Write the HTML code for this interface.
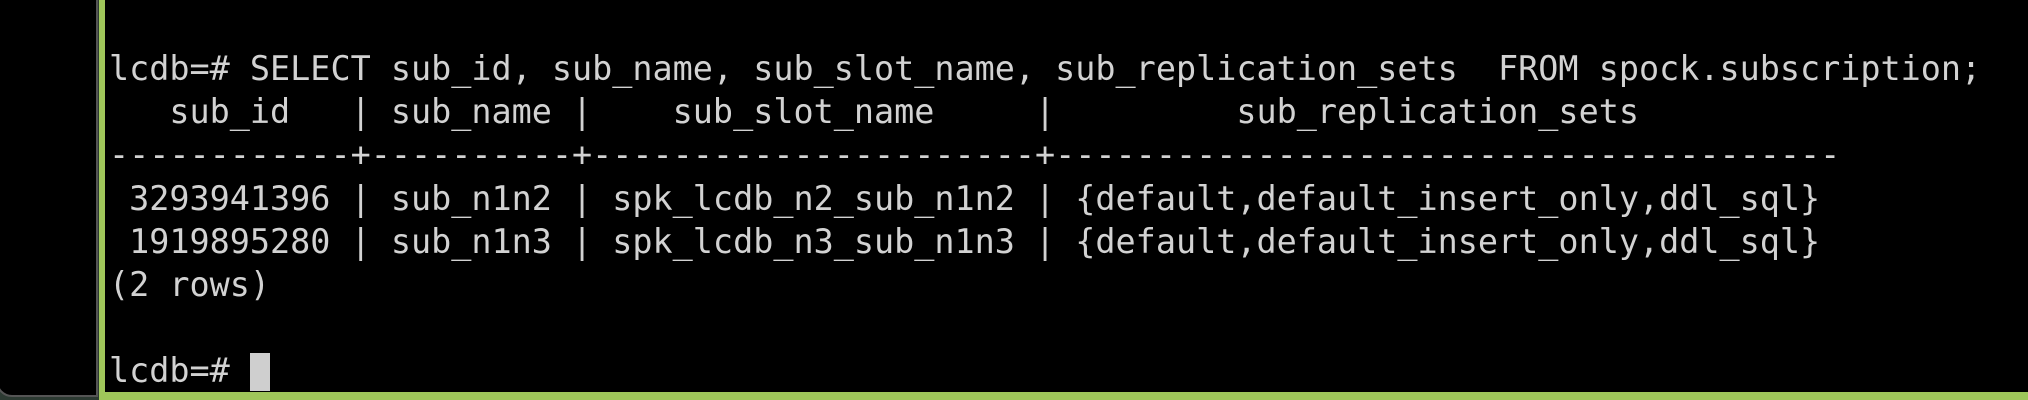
<!DOCTYPE html>
<html><head><meta charset="utf-8"><style>
html,body{margin:0;padding:0;background:#2c3a32;}
body{width:2028px;height:400px;position:relative;overflow:hidden;}
.left{position:absolute;left:-4px;top:-10px;width:102px;height:407px;background:#000;border:2px solid #555;border-bottom-left-radius:16px;box-sizing:border-box;}
.term{position:absolute;left:99px;top:0;width:1935px;height:400px;background:#000;border-left:6px solid #9fc65a;border-bottom:8px solid #9fc65a;box-sizing:border-box;}
pre{position:absolute;left:109px;top:47px;margin:0;font-family:"DejaVu Sans Mono","Liberation Mono",monospace;font-size:33.45px;line-height:43.2px;color:#d2d2d2;}
.cur{display:inline-block;width:20px;height:38px;background:#cfcfcf;vertical-align:-9px;}
</style></head><body>
<div class="left"></div>
<div class="term"></div>
<pre>lcdb=# SELECT sub_id, sub_name, sub_slot_name, sub_replication_sets  FROM spock.subscription;
   sub_id   | sub_name |    sub_slot_name     |         sub_replication_sets
------------+----------+----------------------+---------------------------------------
 3293941396 | sub_n1n2 | spk_lcdb_n2_sub_n1n2 | {default,default_insert_only,ddl_sql}
 1919895280 | sub_n1n3 | spk_lcdb_n3_sub_n1n3 | {default,default_insert_only,ddl_sql}
(2 rows)

lcdb=# <span class="cur"></span></pre>
</body></html>
